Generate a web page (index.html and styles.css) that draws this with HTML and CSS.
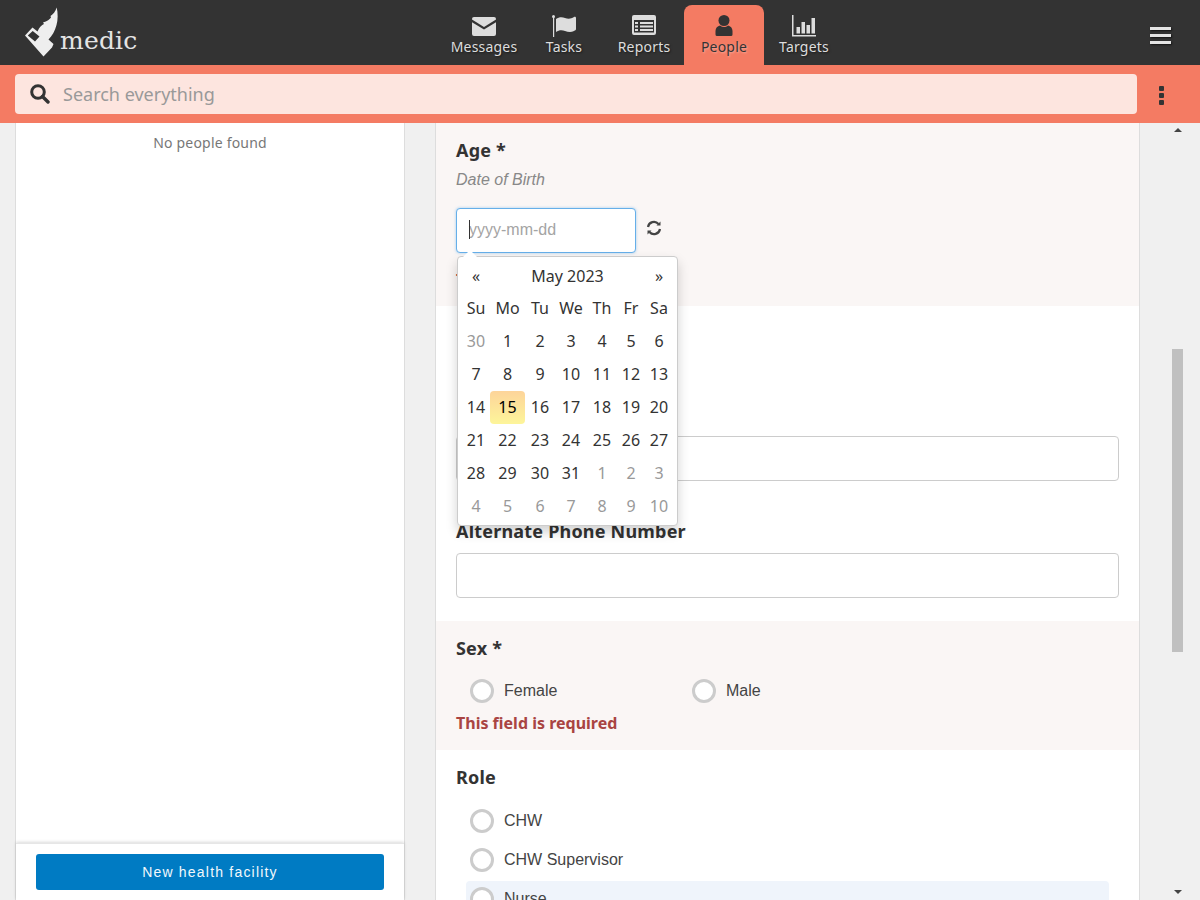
FILE: index.html
```html
<!DOCTYPE html>
<html lang="en">
<head>
    <meta charset="UTF-8">
    <meta name="viewport" content="width=device-width, initial-scale=1.0">
    <title>Medic - People</title>
    <link rel="stylesheet" href="styles.css">
</head>
<body>
    <header class="topbar">
        <a class="logo" href="#">
            <svg class="logo-mark" width="36" height="52" viewBox="24 6 36 52">
                <path fill-rule="evenodd" d="M56.700 7.500C58 13 58 20 56.500 25C55 31 52 36 48.500 39.500L53.500 44L52 47.500L43.500 56.500L25 35.500L32.500 27.500L37.500 31.500C39.500 27 41.500 25 44 24L43 22.500C47 21.500 50 19 51 17.500L50.500 16C53 14.500 55.500 11.500 56.700 7.500ZM32.700 31L27.800 35.500L35 41.500L39.500 36.500Z"/>
            </svg>
            <span class="logo-text">medic</span>
        </a>
        <nav class="tabs">
            <a class="tab" href="#">
                <svg class="tab-icon" width="24" height="24" viewBox="0 0 24 24"><path d="M2 3h20a2 2 0 0 1 2 2v.6L12 13 0 5.600V5a2 2 0 0 1 2-2z"/><path d="M0 8.200l12 7.400 12-7.400V20a2 2 0 0 1-2 2H2a2 2 0 0 1-2-2z"/></svg>
                <span>Messages</span>
            </a>
            <a class="tab" href="#">
                <svg class="tab-icon" width="24" height="24" viewBox="0 0 24 24"><circle cx="1.500" cy="2.500" r="1.500"/><rect x="1" y="3" width="1.200" height="20"/><path d="M4 5c3-2 6-2 9-1s6 1 9-1c1-.5 2 0 2 1v11c0 1-1 1.500-2 2-3 1.500-6 1-9 0s-6-1-9 1z"/></svg>
                <span>Tasks</span>
            </a>
            <a class="tab" href="#">
                <svg class="tab-icon" width="24" height="24" viewBox="0 0 24 24"><path fill-rule="evenodd" d="M2 1h20a2 2 0 0 1 2 2v16a2 2 0 0 1-2 2H2a2 2 0 0 1-2-2V3a2 2 0 0 1 2-2zM2 6v12.500h20V6zM3 8h3v2H3zM8 8h13v2H8zM3 11.500h3v2H3zM8 11.500h13v2H8zM3 15h3v2H3zM8 15h13v2H8z"/></svg>
                <span>Reports</span>
            </a>
            <a class="tab tab-active" href="#">
                <svg class="tab-icon" width="24" height="24" viewBox="0 0 24 24"><circle cx="12" cy="6.500" r="5.500"/><path d="M5 22a1.500 1.500 0 0 1-1.500-1.500V17c0-3 2-5 4.500-5.500 2.500 2 5.500 2 8 0 2.500.5 4.500 2.500 4.500 5.500v3.500a1.500 1.500 0 0 1-1.500 1.500z"/></svg>
                <span>People</span>
            </a>
            <a class="tab" href="#">
                <svg class="tab-icon" width="24" height="24" viewBox="0 0 24 24"><path d="M0 1h1.500v20H25v1.500H0z"/><rect x="4.500" y="13" width="3.500" height="6.500"/><rect x="9.500" y="8" width="3.500" height="11.500"/><rect x="14.500" y="11" width="3.500" height="8.500"/><rect x="19.500" y="4" width="3.500" height="15.500"/></svg>
                <span>Targets</span>
            </a>
        </nav>
        <button class="hamburger" aria-label="Menu">
            <span></span><span></span><span></span>
        </button>
    </header>

    <div class="searchbar">
        <div class="search-box">
            <svg class="search-icon" width="20" height="20" viewBox="0 0 20 20"><circle cx="8" cy="8" r="6.300" fill="none" stroke="#333" stroke-width="3"/><path d="M12.500 12.500L18 18" stroke="#333" stroke-width="3.400" stroke-linecap="round"/></svg>
            <span class="search-placeholder">Search everything</span>
        </div>
        <button class="kebab" aria-label="Options">
            <span></span><span></span><span></span>
        </button>
    </div>

    <div class="main">
        <aside class="people-list">
            <p class="empty-note">No people found</p>
            <div class="list-footer">
                <button class="btn-primary">New health facility</button>
            </div>
        </aside>

        <section class="form-panel">
            <div class="question question-invalid question-age">
                <h3 class="q-label">Age <span class="star">*</span></h3>
                <p class="q-hint">Date of Birth</p>
                <div class="date-row">
                    <div class="date-input">
                        <span class="caret"></span>
                        <span class="date-placeholder">yyyy-mm-dd</span>
                    </div>
                    <svg class="refresh" width="16" height="16" viewBox="0 0 16 16" fill="none" stroke="#444" stroke-width="2.200"><path d="M2 7a6 6 0 0 1 10.500-3"/><path d="M14 9a6 6 0 0 1-10.500 3"/><path d="M14.500 1.500v4h-4z" fill="#444" stroke="none"/><path d="M1.500 14.500v-4h4z" fill="#444" stroke="none"/></svg>
                </div>
                <p class="q-error q-error-hidden">This field is required</p>

                <div class="datepicker">
                    <div class="dp-grid">
                        <div class="dp-nav">&laquo;</div>
                        <div class="dp-month">May 2023</div>
                        <div class="dp-nav">&raquo;</div>

                        <div class="dp-dow">Su</div><div class="dp-dow">Mo</div><div class="dp-dow">Tu</div><div class="dp-dow">We</div><div class="dp-dow">Th</div><div class="dp-dow">Fr</div><div class="dp-dow">Sa</div>

                        <div class="dp-day dp-muted">30</div><div class="dp-day">1</div><div class="dp-day">2</div><div class="dp-day">3</div><div class="dp-day">4</div><div class="dp-day">5</div><div class="dp-day">6</div>
                        <div class="dp-day">7</div><div class="dp-day">8</div><div class="dp-day">9</div><div class="dp-day">10</div><div class="dp-day">11</div><div class="dp-day">12</div><div class="dp-day">13</div>
                        <div class="dp-day">14</div><div class="dp-day dp-today">15</div><div class="dp-day">16</div><div class="dp-day">17</div><div class="dp-day">18</div><div class="dp-day">19</div><div class="dp-day">20</div>
                        <div class="dp-day">21</div><div class="dp-day">22</div><div class="dp-day">23</div><div class="dp-day">24</div><div class="dp-day">25</div><div class="dp-day">26</div><div class="dp-day">27</div>
                        <div class="dp-day">28</div><div class="dp-day">29</div><div class="dp-day">30</div><div class="dp-day">31</div><div class="dp-day dp-muted">1</div><div class="dp-day dp-muted">2</div><div class="dp-day dp-muted">3</div>
                        <div class="dp-day dp-muted">4</div><div class="dp-day dp-muted">5</div><div class="dp-day dp-muted">6</div><div class="dp-day dp-muted">7</div><div class="dp-day dp-muted">8</div><div class="dp-day dp-muted">9</div><div class="dp-day dp-muted">10</div>
                    </div>
                </div>
            </div>

            <div class="question question-phone">
                <h3 class="q-label">Phone Number</h3>
                <div class="text-input"></div>
            </div>

            <div class="question question-alt">
                <h3 class="q-label">Alternate Phone Number</h3>
                <div class="text-input"></div>
            </div>

            <div class="question question-invalid question-sex">
                <h3 class="q-label">Sex <span class="star">*</span></h3>
                <div class="radio-columns">
                    <label class="radio"><span class="radio-dot"></span>Female</label>
                    <label class="radio"><span class="radio-dot"></span>Male</label>
                </div>
                <p class="q-error">This field is required</p>
            </div>

            <div class="question question-role">
                <h3 class="q-label">Role</h3>
                <div class="radio-stack">
                    <label class="radio"><span class="radio-dot"></span>CHW</label>
                    <label class="radio"><span class="radio-dot"></span>CHW Supervisor</label>
                    <label class="radio radio-hover"><span class="radio-dot"></span>Nurse</label>
                </div>
            </div>
        </section>

        <div class="scroll-col">
            <span class="scroll-up"></span>
            <span class="scroll-thumb"></span>
            <span class="scroll-down"></span>
        </div>
    </div>
</body>
</html>
```

FILE: styles.css
```css
* {
    box-sizing: border-box;
}

html,
body {
    height: 100%;
}

body {
    margin: 0;
    height: 900px;
    overflow: hidden;
    background-color: #f0f0f0;
    color: #333;
    font-family: "Noto Sans", sans-serif;
    display: flex;
    flex-direction: column;
}

button {
    font-family: inherit;
    border: 0;
    background: none;
    padding: 0;
}

a {
    text-decoration: none;
    color: inherit;
}

p,
h3 {
    margin: 0;
}

/* top bar */
.topbar {
    height: 65px;
    flex: none;
    background-color: #333;
    display: flex;
    align-items: flex-start;
    padding-left: 24px;
}

.logo {
    display: flex;
    align-items: flex-start;
    width: 420px;
    padding-top: 6px;
}

.logo-mark {
    fill: #eee;
    flex: none;
}

.logo-text {
    color: #e4e4e4;
    font-family: "DejaVu Serif", serif;
    font-size: 25px;
    line-height: 32px;
    letter-spacing: 0.2px;
    margin: 19px 0 0 0;
}

.tabs {
    display: flex;
    padding-top: 5px;
}

.tab {
    width: 80px;
    height: 60px;
    display: flex;
    flex-direction: column;
    align-items: center;
    color: #ddd;
    font-size: 14px;
    line-height: 20px;
    letter-spacing: 0.2px;
    text-shadow: 1px 1px 2px rgba(0, 0, 0, 0.5);
    border-radius: 8px 8px 0 0;
    padding-top: 9px;
}

.tab-icon {
    fill: #ddd;
    height: 24px;
    margin-bottom: -1px;
}

.tab-active {
    background-color: #f47b63;
    color: #333;
    text-shadow: 1px 1px 2px rgba(255, 255, 255, 0.35);
}

.tab-active .tab-icon {
    fill: #333;
}

.hamburger {
    margin-left: auto;
    margin-right: 29px;
    margin-top: 27px;
    display: flex;
    flex-direction: column;
    gap: 4px;
}

.hamburger span {
    display: block;
    width: 21px;
    height: 3px;
    background-color: #e4e4e4;
    box-shadow: 1px 1px 2px rgba(0, 0, 0, 0.6);
}

/* search */
.searchbar {
    height: 58px;
    flex: none;
    background-color: #f47b63;
    display: flex;
    align-items: flex-start;
    padding: 9px 0 0 15px;
}

.search-box {
    width: 1122px;
    height: 40px;
    background-color: #fde5df;
    border-radius: 4px;
    display: flex;
    align-items: center;
    padding-left: 15px;
}

.search-icon {
    flex: none;
}

.search-placeholder {
    margin-left: 13px;
    font-size: 18px;
    color: #999;
}

.kebab {
    margin: 12px 0 0 22px;
    display: flex;
    flex-direction: column;
    gap: 2px;
}

.kebab span {
    display: block;
    width: 5px;
    height: 5px;
    background-color: #333;
    border-radius: 1px;
}

/* main columns */
.main {
    flex: 1;
    min-height: 0;
    display: flex;
    padding-left: 15px;
}

.people-list {
    width: 390px;
    flex: none;
    background-color: #fff;
    border-left: 1px solid #ddd;
    border-right: 1px solid #ddd;
    display: flex;
    flex-direction: column;
}

.empty-note {
    text-align: center;
    font-size: 14px;
    line-height: 20px;
    letter-spacing: 0.2px;
    color: #777;
    padding-top: 10px;
}

.list-footer {
    margin-top: auto;
    height: 57px;
    padding: 10px 20px 0;
    border-top: 1px solid #e6e6e6;
    box-shadow: 0 -1px 3px rgba(0, 0, 0, 0.15);
}

.btn-primary {
    display: block;
    width: 100%;
    height: 36px;
    border-radius: 3px;
    background-color: #007bc3;
    color: #f2f8fc;
    font-family: "Liberation Sans", sans-serif;
    font-size: 14px;
    letter-spacing: 1.2px;
}

.form-panel {
    width: 705px;
    flex: none;
    margin-left: 30px;
    background-color: #fff;
    border-left: 1px solid #ddd;
    border-right: 1px solid #ddd;
    overflow: hidden;
}

/* questions */
.question {
    position: relative;
    padding: 0 20px;
}

.question-invalid {
    background-color: #faf6f5;
}

.question-age {
    height: 183px;
    padding-top: 15px;
    z-index: 2;
}

.question-phone {
    height: 213px;
    padding-top: 95px;
}

.question-alt {
    height: 102px;
}

.question-alt .text-input {
    margin-top: 9px;
}

.question-sex {
    height: 129px;
    padding-top: 15px;
}

.question-role {
    padding-top: 15px;
}

.q-label {
    font-size: 18px;
    line-height: 25px;
    font-weight: 700;
    letter-spacing: 0.2px;
    color: #333;
}

.star {
    font-weight: 700;
}

.q-hint {
    font-family: "Liberation Sans", sans-serif;
    font-style: italic;
    font-size: 16px;
    line-height: 22px;
    color: #888;
    margin-top: 6px;
}

.date-row {
    display: flex;
    align-items: center;
    margin-top: 17px;
}

.date-input {
    position: relative;
    width: 180px;
    height: 45px;
    background-color: #fff;
    border: 1px solid #66afe9;
    border-radius: 4px;
    box-shadow: 0 0 3px rgba(102, 175, 233, 0.6);
    padding: 0 0 2px 12px;
    display: flex;
    align-items: center;
}

.caret {
    position: absolute;
    left: 12px;
    top: 11px;
    width: 1px;
    height: 19px;
    background-color: #333;
}

.date-placeholder {
    font-family: "Liberation Sans", sans-serif;
    font-size: 16px;
    color: #a4a4a4;
}

.refresh {
    margin: 0 0 6px 10px;
}

.q-error {
    font-size: 16px;
    line-height: 22px;
    font-weight: 700;
    color: #a94442;
}

.q-error-hidden {
    margin-top: 16px;
}

.text-input {
    height: 45px;
    margin-top: 10px;
    background-color: #fff;
    border: 1px solid #ccc;
    border-radius: 4px;
}

/* date picker */
.datepicker {
    position: absolute;
    z-index: 5;
    left: 21px;
    top: 133px;
    width: 221px;
    height: 270px;
    background-color: #fff;
    border: 1px solid #ccc;
    border-radius: 4px;
    box-shadow: 0 6px 12px rgba(0, 0, 0, 0.18);
    padding: 3px 4px;
}

.datepicker::before {
    content: "";
    position: absolute;
    left: 5px;
    top: -7px;
    border-left: 7px solid transparent;
    border-right: 7px solid transparent;
    border-bottom: 7px solid #fff;
}

.dp-grid {
    display: grid;
    grid-template-columns: 28px 35px 30px 32px 30px 28px 28px;
    grid-template-rows: 32px;
    grid-auto-rows: 33px;
    font-size: 16px;
}

.dp-grid > div {
    display: flex;
    align-items: center;
    justify-content: center;
}

.dp-grid > .dp-dow,
.dp-grid > .dp-day {
    padding-bottom: 2px;
}

.dp-month {
    grid-column: span 5;
}

.dp-muted {
    color: #999;
}

.dp-today {
    border-radius: 4px;
    color: #000;
    background-image: linear-gradient(to bottom, #fdd49a, #fdf59a);
}

/* radios */
.radio {
    display: flex;
    align-items: center;
    font-family: "Liberation Sans", sans-serif;
    font-size: 16px;
    color: #444;
    height: 36px;
    padding-left: 4px;
    border-radius: 4px;
}

.radio-dot {
    width: 24px;
    height: 24px;
    flex: none;
    border: 3px solid #ccc;
    border-radius: 50%;
    background-color: #fff;
    margin-right: 10px;
}

.radio-columns {
    display: grid;
    grid-template-columns: 222px 222px;
    padding: 12px 0 0 10px;
}

.radio-columns + .q-error {
    margin-top: 3px;
}

.radio-stack {
    display: flex;
    flex-direction: column;
    gap: 3px;
    padding: 13px 10px 0;
}

.radio-hover {
    background-color: #eff4fb;
}

/* scrollbar column */
.scroll-col {
    display: flex;
    flex-direction: column;
    align-items: center;
    padding: 5px 0 6px 0;
    margin-left: 32px;
    width: 11px;
    flex: none;
}

.scroll-up,
.scroll-down {
    width: 0;
    height: 0;
    border-left: 4px solid transparent;
    border-right: 4px solid transparent;
}

.scroll-up {
    border-bottom: 4px solid #444;
}

.scroll-down {
    border-top: 4px solid #444;
    margin-top: auto;
}

.scroll-thumb {
    width: 11px;
    height: 303px;
    background-color: #c0c0c0;
    margin-top: 217px;
}
```
